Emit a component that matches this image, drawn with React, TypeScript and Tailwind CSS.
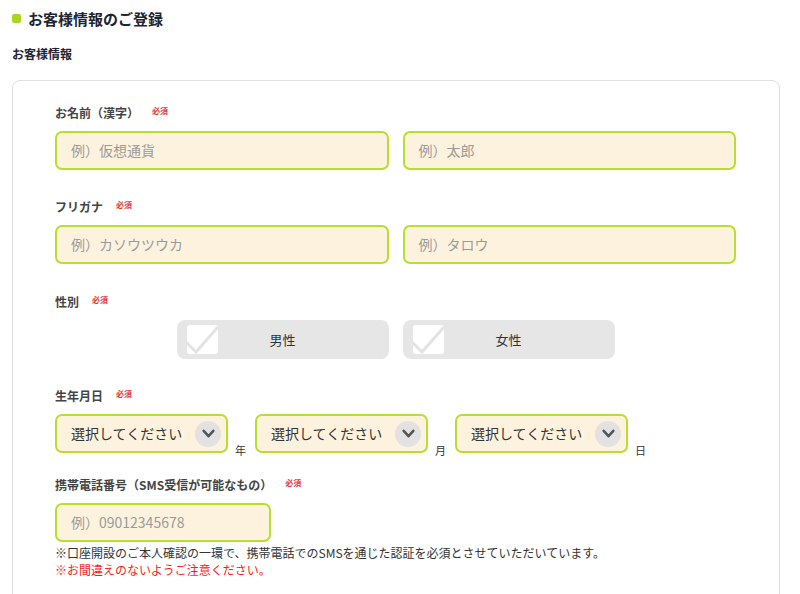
import React from 'react';

const FONT = { fontFamily: '"Noto Sans CJK JP", "Noto Sans", sans-serif' };

function Label({ text }: { text: string }) {
    return (
        <div className="flex items-center h-[14px] mb-[11px]">
            <span className="text-[12px] font-bold text-[#444] leading-none">{text}</span>
            <span className="ml-[13px] text-[8px] font-bold text-[#e8343a] leading-none -mt-[4px]">必須</span>
        </div>
    );
}

function TextInput({ placeholder, className = '' }: { placeholder: string; className?: string }) {
    return (
        <div
            className={`h-[39px] rounded-[7px] border-2 border-[#b6e02e] bg-[#fdf2de] flex items-center px-[14px] text-[14px] text-[#9a9a9a] ${className}`}
        >
            {placeholder}
        </div>
    );
}

function GenderBox({ text }: { text: string }) {
    return (
        <div className="w-[212px] h-[39px] rounded-[8px] bg-[#e6e6e6] relative flex items-center justify-center">
            <div className="absolute left-[10px] top-[5px] w-[31px] h-[29px] rounded-[3px] bg-white overflow-hidden">
                <svg width="31" height="29" viewBox="0 0 31 29" className="absolute left-0 top-0">
                    <path d="M-2 16 L9 27 L31 2" fill="none" stroke="#e3e3e3" strokeWidth="3" />
                </svg>
            </div>
            <span className="text-[13px] text-[#333]">{text}</span>
        </div>
    );
}

function SelectBox({ unit }: { unit: string }) {
    return (
        <div className="flex items-end">
            <div className="w-[173px] h-[39px] rounded-[7px] border-2 border-[#b6e02e] bg-[#fdf2de] flex items-center justify-between pl-[14px] pr-[5px]">
                <span className="text-[14px] text-[#333]">選択してください</span>
                <div className="w-[26px] h-[26px] rounded-full bg-[#e2e2e2] flex items-center justify-center">
                    <svg width="15" height="15" viewBox="0 0 14 14">
                        <path d="M2.5 4.5 L7 9.5 L11.5 4.5" fill="none" stroke="#555" strokeWidth="2.4" strokeLinecap="round" strokeLinejoin="round" />
                    </svg>
                </div>
            </div>
            <span className="ml-[7px] mr-[9px] text-[11px] text-[#333] leading-none -mb-[3px]">{unit}</span>
        </div>
    );
}

export default function App() {
    return (
        <div className="w-[800px] h-[594px] bg-white overflow-hidden" style={FONT}>
            {/* Title */}
            <div className="flex items-center pl-[12px] pt-[8px] h-[20px] box-content">
                <span className="w-[9px] h-[9px] rounded-[2px] bg-[#a8d61e]" />
                <h1 className="ml-[7px] text-[15px] font-bold text-[#1f2433] leading-none">お客様情報のご登録</h1>
            </div>

            <h2 className="mt-[20px] pl-[12px] text-[12px] font-bold text-[#1f2433] leading-none">お客様情報</h2>

            {/* Card */}
            <div className="mt-[20px] ml-[12px] w-[768px] rounded-[8px] border border-[#e0e0e0] pl-[42px] pr-[43px] pt-[25px] pb-[40px]">
                <div className="flex flex-col gap-[30px]">
                    <div>
                        <Label text="お名前（漢字）" />
                        <div className="flex gap-[14px]">
                            <TextInput placeholder="例）仮想通貨" className="flex-1" />
                            <TextInput placeholder="例）太郎" className="flex-1" />
                        </div>
                    </div>

                    <div>
                        <Label text="フリガナ" />
                        <div className="flex gap-[14px]">
                            <TextInput placeholder="例）カソウツウカ" className="flex-1" />
                            <TextInput placeholder="例）タロウ" className="flex-1" />
                        </div>
                    </div>

                    <div className="mt-[1px]">
                        <Label text="性別" />
                        <div className="flex gap-[14px] justify-center">
                            <GenderBox text="男性" />
                            <GenderBox text="女性" />
                        </div>
                    </div>

                    <div>
                        <Label text="生年月日" />
                        <div className="flex">
                            <SelectBox unit="年" />
                            <SelectBox unit="月" />
                            <SelectBox unit="日" />
                        </div>
                    </div>

                    <div className="-mt-[5px]">
                        <Label text="携帯電話番号（SMS受信が可能なもの）" />
                        <TextInput placeholder="例）09012345678" className="w-[216px]" />
                        <p className="mt-[2px] text-[12px] leading-[17px] text-[#333]">
                            ※口座開設のご本人確認の一環で、携帯電話でのSMSを通じた認証を必須とさせていただいています。
                        </p>
                        <p className="text-[12px] leading-[17px] text-[#ff1a1a]">※お間違えのないようご注意ください。</p>
                    </div>
                </div>
            </div>
        </div>
    );
}
